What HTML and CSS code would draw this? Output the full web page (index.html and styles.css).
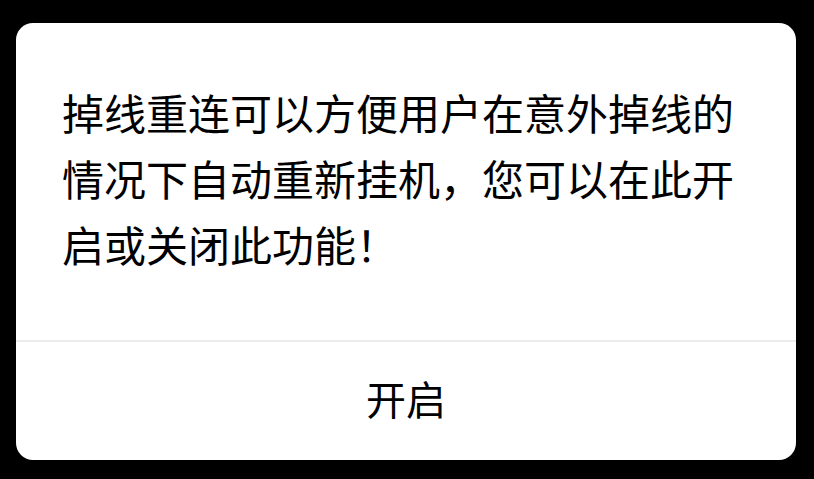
FILE: index.html
```html
<!DOCTYPE html>
<html lang="zh-CN">
<head>
<meta charset="utf-8">
<link rel="stylesheet" href="styles.css">
</head>
<body>
<div class="dialog">
  <div class="message">掉线重连可以方便用户在意外掉线的情况下自动重新挂机，您可以在此开启或关闭此功能！</div>
  <div class="actions"><span class="btn">开启</span></div>
</div>
</body>
</html>
```
FILE: styles.css
```css
html, body {
  margin: 0;
  padding: 0;
  background: #000;
  width: 814px;
  height: 479px;
  overflow: hidden;
}
.dialog {
  margin: 23px 0 0 16px;
  width: 780px;
  height: 437px;
  background: #fff;
  border-radius: 17px;
  display: flex;
  flex-direction: column;
  font-family: "Noto Sans CJK SC", "Noto Sans", sans-serif;
  color: #000;
}
.message {
  padding: 56px 46px 0 46px;
  height: 319px;
  box-sizing: border-box;
  font-size: 42px;
  line-height: 66px;
  border-bottom: 2px solid #ececec;
}
.actions {
  flex: 1;
  display: flex;
  align-items: center;
  justify-content: center;
  padding-bottom: 6px;
}
.btn {
  font-size: 40px;
  line-height: 1;
}
```
